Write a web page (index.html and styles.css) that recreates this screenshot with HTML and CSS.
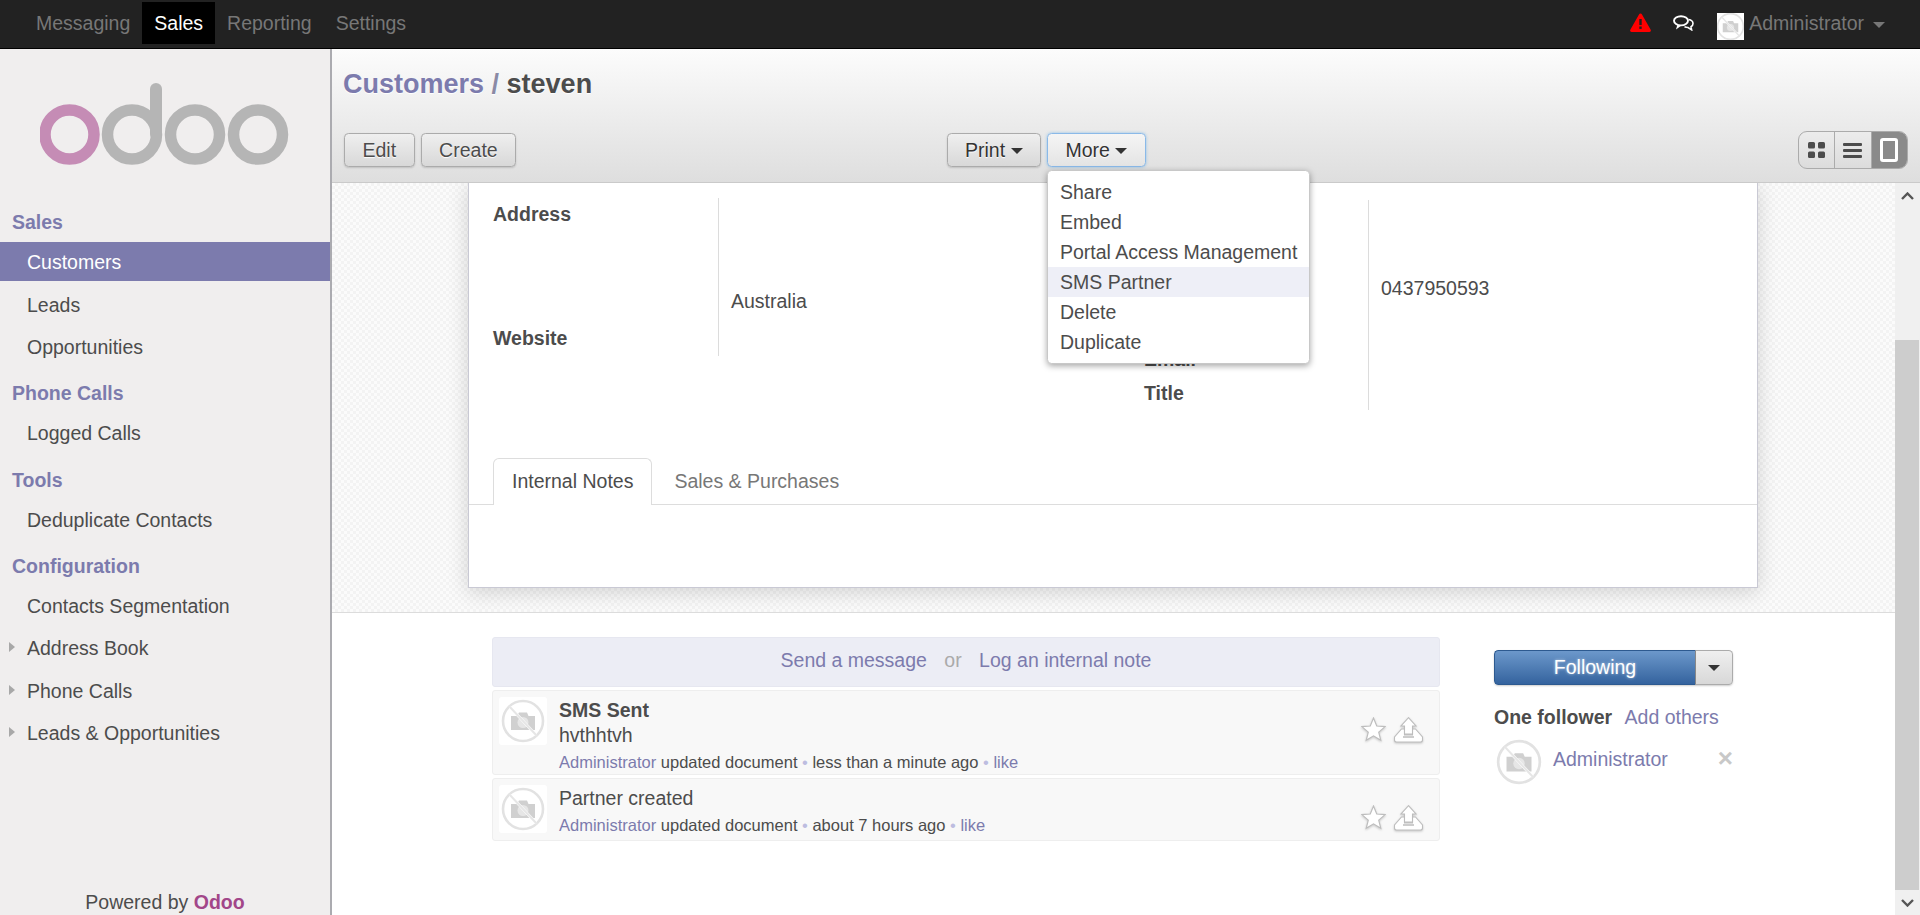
FILE: index.html
```html
<!DOCTYPE html>
<html lang="en">
<head>
<meta charset="utf-8">
<title>Customers / steven - Odoo</title>
<link rel="stylesheet" href="styles.css">
</head>
<body>
<svg class="defs" width="0" height="0" aria-hidden="true">
  <symbol id="noavatar" viewBox="0 0 48 48">
    <circle cx="24" cy="24" r="20" fill="none" stroke="#e2e2e2" stroke-width="2.6"/>
    <path fill="#d0d0d0" d="M12 19h6l2-3.500h8l1.500 3.500H36v14H12z"/>
    <circle cx="24" cy="25.500" r="5.500" fill="#e6e6e6"/>
    <path d="M11 10l26 28" stroke="#fff" stroke-width="2.800"/>
    <path d="M10 9l28 30" stroke="#e6e6e6" stroke-width="2"/>
  </symbol>
  <symbol id="star" viewBox="0 0 24 24">
    <path d="M12 1l3.100 7.600 8.100.6-6.200 5.300 2 7.900L12 18.100l-7 4.300 2-7.900L.8 9.200l8.100-.6z" fill="#fff" stroke="#bdbdbd" stroke-width="1.100"/>
  </symbol>
  <symbol id="inbox" viewBox="-.5 0 29 26">
    <path d="M7 12h3v6h8v-6h3l7 8v3a2 2 0 0 1-2 2H2a2 2 0 0 1-2-2v-3z" fill="#fff" stroke="#bdbdbd" stroke-width="1.100"/>
    <path d="M14 .7L21.500 9H18v8h-8V9H6.500z" fill="#fff" stroke="#bdbdbd" stroke-width="1.100"/>
    <path d="M8.500 20h11" stroke="#c8c8c8" stroke-width="1.800"/>
  </symbol>
</svg>

<nav class="topbar">
  <ul class="topmenu">
    <li><a class="topitem">Messaging</a></li>
    <li><a class="topitem is-active">Sales</a></li>
    <li><a class="topitem">Reporting</a></li>
    <li><a class="topitem">Settings</a></li>
  </ul>
  <div class="topright">
    <svg class="warn" viewBox="0 0 21 19" width="21" height="19"><path d="M10.500 0.500c.7 0 1.200.4 1.500 1l8.700 15.300c.5 1 0 2.200-1.300 2.200H1.600C.3 19-.2 17.800.3 16.800L9 1.500c.3-.6.800-1 1.500-1z" fill="#f00"/><rect x="9.300" y="6" width="2.400" height="6" fill="#222"/><rect x="9.300" y="13.500" width="2.400" height="2.400" fill="#222"/></svg>
    <svg class="chat" viewBox="0 0 21 16" width="21" height="16"><path d="M15.500 4.500c3 .5 4.500 2 4.500 4 0 1.500-.8 2.600-2 3.300l.6 3-3.600-2.300c-1.200 0-2.400-.2-3.500-.7" fill="none" stroke="#fff" stroke-width="1.600"/><ellipse cx="8" cy="5.800" rx="7" ry="4.600" fill="#222" stroke="#fff" stroke-width="1.900"/><path d="M3 14.500l1.300-4.500 3.500 1z" fill="#fff"/></svg>
    <span class="useravatar"><svg width="31" height="31"><use href="#noavatar"/></svg></span>
    <span class="username">Administrator</span>
    <span class="usercaret"></span>
  </div>
</nav>

<div class="app">
  <aside class="sidebar">
    <div class="logo">
      <svg viewBox="0 0 249 82" width="249" height="82">
        <circle cx="29.500" cy="51.500" r="24.500" fill="none" stroke="#c58cb5" stroke-width="11.500"/>
        <circle cx="92" cy="51.500" r="24.500" fill="none" stroke="#b5b5b5" stroke-width="11.500"/>
        <path d="M116 51V6" stroke="#b5b5b5" stroke-width="12" stroke-linecap="round"/>
        <circle cx="155" cy="51.500" r="24.500" fill="none" stroke="#b5b5b5" stroke-width="11.500"/>
        <circle cx="218" cy="51.500" r="24.500" fill="none" stroke="#b5b5b5" stroke-width="11.500"/>
      </svg>
    </div>
    <div class="menu">
      <h4 class="menuhead">Sales</h4>
      <a class="menuitem is-active">Customers</a>
      <a class="menuitem">Leads</a>
      <a class="menuitem">Opportunities</a>
      <h4 class="menuhead">Phone Calls</h4>
      <a class="menuitem">Logged Calls</a>
      <h4 class="menuhead">Tools</h4>
      <a class="menuitem">Deduplicate Contacts</a>
      <h4 class="menuhead">Configuration</h4>
      <a class="menuitem">Contacts Segmentation</a>
      <a class="menuitem has-sub">Address Book</a>
      <a class="menuitem has-sub">Phone Calls</a>
      <a class="menuitem has-sub">Leads &amp; Opportunities</a>
    </div>
    <div class="powered">Powered by <b class="brand">Odoo</b></div>
  </aside>

  <main class="content">
    <header class="header">
      <h2 class="crumbs"><a class="crumblink">Customers</a> <span class="crumbsep">/</span> steven</h2>
      <div class="toolbar">
        <div class="tools-left">
          <button class="btn btn-left">Edit</button>
          <button class="btn btn-left">Create</button>
        </div>
        <div class="tools-mid">
          <button class="btn btn-print">Print <i class="caret"></i></button>
          <div class="dropwrap">
            <button class="btn btn-more">More <i class="caret"></i></button>
            <ul class="dropdown">
              <li class="dropitem">Share</li>
              <li class="dropitem">Embed</li>
              <li class="dropitem">Portal Access Management</li>
              <li class="dropitem is-hover">SMS Partner</li>
              <li class="dropitem">Delete</li>
              <li class="dropitem">Duplicate</li>
            </ul>
          </div>
        </div>
        <div class="viewswitch">
          <span class="viewbtn">
            <svg width="17" height="16" viewBox="0 0 17 16"><g fill="#4c4c4c"><rect width="7" height="6.500" rx="1.500"/><rect x="10" width="7" height="6.500" rx="1.500"/><rect y="9.500" width="7" height="6.500" rx="1.500"/><rect x="10" y="9.500" width="7" height="6.500" rx="1.500"/></g></svg>
          </span>
          <span class="viewbtn">
            <svg width="19" height="15" viewBox="0 0 19 15"><g fill="#4c4c4c"><rect width="19" height="3" rx="1"/><rect y="6" width="19" height="3" rx="1"/><rect y="12" width="19" height="3" rx="1"/></g></svg>
          </span>
          <span class="viewbtn is-active">
            <svg width="18" height="24" viewBox="0 0 18 24"><rect x="1.500" y="1.500" width="15" height="21" rx="1.500" fill="none" stroke="#fff" stroke-width="3"/></svg>
          </span>
        </div>
      </div>
    </header>

    <div class="viewport">
      <div class="scrollarea">
        <section class="formbg">
          <div class="sheet">
            <div class="groups">
              <div class="group group-left">
                <div class="labels labels-left">
                  <div class="label">Address</div>
                  <div class="label label-website">Website</div>
                </div>
                <div class="values values-left">Australia</div>
              </div>
              <div class="group group-right">
                <div class="labels labels-right">
                  <div class="label">Email</div>
                  <div class="label label-title">Title</div>
                </div>
                <div class="values values-right">0437950593</div>
              </div>
            </div>
            <div class="tabs">
              <a class="tab is-active">Internal Notes</a>
              <a class="tab">Sales &amp; Purchases</a>
            </div>
            <div class="tabbody"></div>
          </div>
        </section>

        <section class="chatter">
          <div class="thread">
            <div class="compose">
              <a class="link">Send a message</a>
              <span class="or">or</span>
              <a class="link">Log an internal note</a>
            </div>
            <article class="msg msg-tall">
              <svg class="msgavatar" width="48" height="48"><use href="#noavatar"/></svg>
              <div class="msgbody">
                <div class="msgtitle">SMS Sent</div>
                <div class="msgtext">hvthhtvh</div>
                <div class="msgmeta"><a class="link">Administrator</a> updated document <span class="dot">•</span> less than a minute ago <span class="dot">•</span> <a class="link">like</a></div>
              </div>
              <div class="msgicons">
                <svg width="25" height="25"><use href="#star"/></svg>
                <svg width="29" height="26"><use href="#inbox"/></svg>
              </div>
            </article>
            <article class="msg msg-short">
              <svg class="msgavatar" width="48" height="48"><use href="#noavatar"/></svg>
              <div class="msgbody">
                <div class="msgtext">Partner created</div>
                <div class="msgmeta"><a class="link">Administrator</a> updated document <span class="dot">•</span> about 7 hours ago <span class="dot">•</span> <a class="link">like</a></div>
              </div>
              <div class="msgicons">
                <svg width="25" height="25"><use href="#star"/></svg>
                <svg width="29" height="26"><use href="#inbox"/></svg>
              </div>
            </article>
          </div>
          <div class="followers">
            <div class="followbtn">
              <span class="followmain">Following</span>
              <span class="followcaret"><i class="caret"></i></span>
            </div>
            <div class="followcount"><b>One follower</b> <a class="link addothers">Add others</a></div>
            <div class="follower">
              <svg width="50" height="50"><use href="#noavatar"/></svg>
              <a class="link followername">Administrator</a>
              <span class="remove">×</span>
            </div>
          </div>
        </section>
      </div>
      <div class="scrollbar">
        <span class="sbarrow"><svg width="13" height="8" viewBox="0 0 13 8"><path d="M1 7l5.500-5.500L12 7" fill="none" stroke="#555" stroke-width="2.400"/></svg></span>
        <span class="sbthumb"></span>
        <span class="sbarrow"><svg width="13" height="8" viewBox="0 0 13 8"><path d="M1 1l5.500 5.500L12 1" fill="none" stroke="#555" stroke-width="2.400"/></svg></span>
      </div>
    </div>
  </main>
</div>
</body>
</html>
```

FILE: styles.css
```css
* { box-sizing: border-box; }
html, body { margin: 0; height: 915px; overflow: hidden; }
body {
  font-family: "Liberation Sans", Arial, sans-serif;
  font-size: 19.5px;
  color: #4c4c4c;
  display: flex;
  flex-direction: column;
  background: #fff;
}
.defs { position: absolute; }
a { color: inherit; text-decoration: none; }
ul { list-style: none; margin: 0; padding: 0; }

/* Top bar */
.topbar {
  height: 49px;
  flex: none;
  background: #222;
  border-bottom: 1px solid #000;
  display: flex;
  justify-content: space-between;
  padding: 2px 35px 0 24px;
}
.topmenu { display: flex; }
.topitem {
  display: block;
  height: 42px;
  line-height: 42px;
  padding: 0 12px;
  color: #777;
}
.topitem.is-active { background: #000; color: #fff; }
.topright { display: flex; align-items: center; height: 42px; }
.warn { margin-right: 22px; margin-top: -2px; }
.chat { margin-right: 23px; }
.useravatar {
  width: 27px; height: 27px;
  background: #fff;
  display: flex; align-items: center; justify-content: center;
  overflow: hidden;
  margin: 6px 5px 0 0;
}
.useravatar svg { flex: none; }
.username { color: #777; margin-right: 9px; }
.usercaret {
  border-left: 6px solid transparent;
  border-right: 6px solid transparent;
  border-top: 6px solid #777;
  margin-top: 4px;
}

/* Layout */
.app { flex: 1; display: flex; min-height: 0; }

/* Sidebar */
.sidebar {
  width: 332px;
  flex: none;
  background: #f0eeee;
  border-right: 2px solid #ababb0;
  display: flex;
  flex-direction: column;
}
.logo { padding: 34px 0 0 40px; height: 160px; }
.logo svg { display: block; filter: blur(.5px); }
.menu { display: flex; flex-direction: column; flex: 1; }
.menuhead {
  margin: 0;
  font-size: 19.5px;
  font-weight: bold;
  color: #7c7bad;
  height: 33px;
  line-height: 26px;
  padding: 0 0 0 12px;
}
.menuitem {
  display: block;
  height: 39px;
  line-height: 40px;
  padding-left: 27px;
  margin-bottom: 3.500px;
  position: relative;
}
.menuitem.is-active { background: #7c7bad; color: #fff; }
.menuitem.has-sub::before {
  content: "";
  position: absolute;
  left: 9px; top: 14px;
  border-left: 6px solid #a8a8a8;
  border-top: 5.500px solid transparent;
  border-bottom: 5.500px solid transparent;
}
.menuitem + .menuhead { margin-top: 10.750px; }
.powered { text-align: center; height: 26px; line-height: 26px; }
.brand { color: #a24689; }

/* Content */
.content { flex: 1; min-width: 0; display: flex; flex-direction: column; }
.header {
  height: 134px;
  flex: none;
  background: linear-gradient(#fcfcfc, #dedede);
  border-bottom: 1px solid #cacaca;
  padding: 0 12px;
  position: relative;
  z-index: 2;
}
.crumbs {
  margin: 0 0 0 -1px;
  height: 84px;
  padding-top: 19px;
  font-size: 27px;
  line-height: 32px;
  font-weight: bold;
  text-shadow: 0 1px 1px #fff;
}
.crumblink { color: #7c7bad; }
.crumbsep { color: #8a8aa5; }
.toolbar { display: flex; align-items: flex-start; }
.tools-left { display: flex; gap: 6px; width: 603px; }
.tools-mid { display: flex; gap: 6px; }
.btn {
  height: 34px;
  padding: 0 17px;
  font: inherit;
  color: #4c4c4c;
  background: linear-gradient(#efefef, #d8d8d8);
  border: 1px solid #ababab;
  border-radius: 4.500px;
  box-shadow: 0 1px 2px rgba(0,0,0,.15);
  text-shadow: 0 1px 1px #fff;
}
.btn-left { padding: 0 17.500px; }
.btn-print, .btn-more { color: #333; }
.btn-more {
  padding: 0 18px;
  background: linear-gradient(#f5f5f5, #e4e4e4);
  border-color: #8ab9e8;
  box-shadow: 0 0 3px rgba(82,168,236,.6);
}
.caret {
  display: inline-block;
  border-left: 6px solid transparent;
  border-right: 6px solid transparent;
  border-top: 6px solid #333;
  vertical-align: 3px;
}
.dropwrap { position: relative; }
.dropdown {
  position: absolute;
  top: 37px; left: 0;
  width: 263px;
  padding: 6px 0;
  background: #fff;
  border: 1px solid #c8c8c8;
  border-radius: 4.500px;
  box-shadow: 0 2px 6px rgba(0,0,0,.35);
  z-index: 5;
}
.dropitem {
  height: 30px;
  line-height: 30px;
  padding-left: 12.500px;
  white-space: nowrap;
}
.dropitem.is-hover { background: #eeeff7; }
.viewswitch {
  margin-left: auto;
  margin-top: -2px;
  width: 110px;
  height: 38px;
  display: flex;
  border: 1px solid #ababab;
  border-radius: 9px;
  overflow: hidden;
  background: linear-gradient(#ececec, #dcdcdc);
}
.viewbtn {
  flex: 1;
  display: flex; align-items: center; justify-content: center;
  border-right: 1px solid #ababab;
}
.viewbtn:last-child { border-right: 0; }
.viewbtn.is-active { background: #8a8a8a; }

/* Viewport */
.viewport { flex: 1; display: flex; min-height: 0; }
.scrollarea { flex: 1; min-width: 0; }
.scrollbar {
  width: 25px;
  flex: none;
  background: #f0f0f0;
  display: flex;
  flex-direction: column;
}
.sbarrow { height: 25px; display: flex; align-items: center; justify-content: center; padding-right: 1px; flex: none; }
.sbthumb { display: block; margin: 132px 1px 0 0; flex: 1; background: #cdcdcd; }

/* Form */
.formbg {
  height: 430px;
  padding: 0 137px 0 136px;
  border-bottom: 1px solid #dcdcdc;
  background: repeating-conic-gradient(#f3f3f3 0 25%, #fbfbfb 0 50%) 0 0 / 6px 6px;
}
.sheet {
  height: 405px;
  background: #fff;
  border: 1px solid #c9c9d4;
  border-top: 0;
  box-shadow: 0 4px 20px rgba(0,0,0,.16);
  display: flex;
  flex-direction: column;
}
.groups { display: flex; height: 275px; padding-left: 24px; }
.group { display: flex; }
.group-left { width: 651px; height: 158px; margin-top: 15px; }
.group-right { width: 500px; height: 210px; margin-top: 17px; }
.labels { width: 225px; font-weight: bold; flex: none; }
.labels-left { padding-top: 1px; }
.labels-right { width: 224px; padding-top: 144px; }
.label { height: 30px; line-height: 30px; }
.label-website { margin-top: 94px; }
.label-title { margin-top: 4px; }
.values { flex: 1; border-left: 1px solid #dcdcdc; padding-left: 12px; line-height: 30px; }
.values-left { padding-top: 88px; }
.values-right { padding-top: 73px; }
.tabs {
  display: flex;
  height: 47px;
  padding-left: 24px;
  border-bottom: 1px solid #ddd;
  flex: none;
}
.tab {
  height: 47px;
  line-height: 45px;
  padding: 0 18px;
  color: #777;
  border: 1px solid transparent;
  border-bottom: 0;
  margin-right: 3px;
}
.tab.is-active {
  color: #4c4c4c;
  background: #fff;
  border-color: #ddd;
  border-radius: 6px 6px 0 0;
}
.tabbody { flex: 1; }

/* Chatter */
.chatter { display: flex; padding: 24px 0 0 160px; }
.thread { width: 948px; display: flex; flex-direction: column; gap: 3px; }
.link { color: #7c7bad; }
.compose {
  height: 50px;
  line-height: 45px;
  text-align: center;
  background: #ecedf5;
  border: 1px solid #e6e7f0;
  border-radius: 3px;
}
.or { color: #aaa; margin: 0 12px; }
.msg {
  display: flex;
  background: #f8f8f8;
  border: 1px solid #eee;
  border-radius: 3px;
  padding: 6px 16px 0 6px;
}
.msg-tall { height: 85px; }
.msg-short { height: 63px; }
.msgavatar { background: #fff; border-radius: 3px; flex: none; }
.msgbody { flex: 1; padding: 0 0 0 12px; }
.msgtitle { font-weight: bold; height: 25px; line-height: 26px; }
.msgtext { height: 25px; line-height: 26px; color: #4c4c4c; }
.msg-tall .msgmeta { margin-top: 2px; }
.msg-short .msgbody .msgtext { height: 27px; }
.msgmeta { font-size: 16.500px; line-height: 26px; }
.dot { color: #bdbde0; }
.msgicons { display: flex; gap: 8px; align-items: flex-start; padding-top: 20px; }
.msgicons svg { filter: drop-shadow(0 1px 1px rgba(0,0,0,.2)); }
.followers { margin-left: 54px; width: 239px; padding-top: 13px; }
.followbtn {
  display: flex;
  height: 35px;
  border-radius: 4.500px;
  box-shadow: 0 1px 2px rgba(0,0,0,.2);
}
.followmain {
  width: 202px;
  text-align: center;
  line-height: 33px;
  color: #fff;
  background: linear-gradient(#6c98cb, #34639e);
  border: 1px solid #2d5a90;
  border-right: 1px solid #888;
  border-radius: 4.500px 0 0 4.500px;
  text-shadow: 0 0 3px rgba(255,255,255,.6);
}
.followcaret {
  width: 37px;
  display: flex; align-items: center; justify-content: center;
  background: linear-gradient(#efefef, #d8d8d8);
  border: 1px solid #ababab;
  border-left: 0;
  border-radius: 0 4.500px 4.500px 0;
}
.followcount { margin-top: 17px; line-height: 30px; height: 30px; }
.followcount b { color: #4c4c4c; }
.addothers { margin-left: 7px; }
.follower { display: flex; align-items: flex-start; margin-top: 5px; position: relative; }
.follower svg { flex: none; }
.followername { margin-left: 9px; line-height: 30px; margin-top: 7px; }
.remove {
  position: absolute;
  right: 0; top: 6px;
  color: #c8c8c8;
  font-size: 26px;
  line-height: 30px;
  font-weight: bold;
}
```
